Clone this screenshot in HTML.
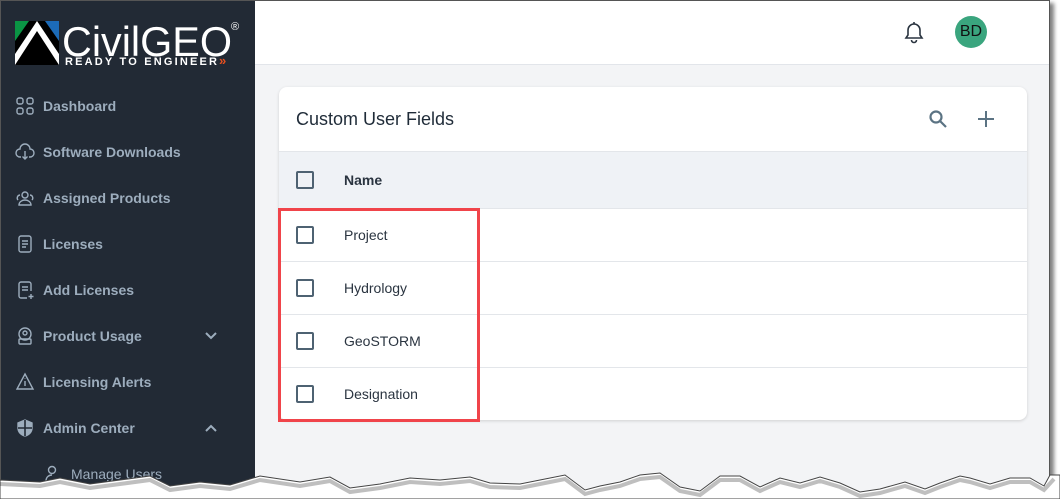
<!DOCTYPE html>
<html><head><style>
*{box-sizing:border-box;margin:0;padding:0}
body{width:1060px;height:499px;background:#fff;position:relative;overflow:hidden;font-family:"Liberation Sans",Arial,sans-serif}
#frame{position:absolute;left:0;top:0;width:1050px;height:499px;border:1px solid #555;background:#f3f4f6;overflow:hidden;box-shadow:4px 3px 4px rgba(0,0,0,.5)}
#side{position:absolute;left:0;top:0;width:254px;height:100%;background:#222a35}
.nav{position:absolute;left:14px;color:#9dadbd;font-size:14px;font-weight:bold;display:flex;align-items:center;gap:8px}
.nav svg{width:20px;height:20px;stroke:#9dadbd;fill:none;stroke-width:1.4}
#top{position:absolute;left:254px;top:0;right:0;height:64px;background:#fff;border-bottom:1px solid #e2e5ea}
#card{position:absolute;left:278px;top:86px;width:748px;height:333px;background:#fff;border-radius:8px;box-shadow:0 1px 3px rgba(0,0,0,.15);overflow:hidden}
.row{position:absolute;left:0;width:100%;height:53px;border-top:1px solid #e3e6ea;display:flex;align-items:center;font-size:14px;color:#2a3440}
.cb{width:18px;height:18px;border:2px solid #4e6272;border-radius:2px;margin-left:17px;margin-right:30px}
</style></head><body>
<div id="frame">
<div id="side">
 <svg style="position:absolute;left:14px;top:18px" width="226" height="48" viewBox="0 0 226 48">
  <rect x="0" y="2" width="44" height="44" fill="#000"/>
  <polygon points="0,2 14,2 0,22" fill="#0a9444"/>
  <polygon points="30,2 44,2 44,22" fill="#1c6bb8"/>
  <polygon points="0,46 0,35 22,2 44,35 44,46 22,12" fill="#fff"/>
  <text x="47" y="37" font-family="Liberation Sans" font-size="42" fill="#fff" textLength="170" lengthAdjust="spacingAndGlyphs">CivilGEO</text>
  <text x="216" y="11" font-family="Liberation Sans" font-size="11" fill="#fff">®</text>
  <text x="50" y="46" font-family="Liberation Sans" font-weight="bold" font-size="11" fill="#fff" textLength="152" lengthAdjust="spacing">READY TO ENGINEER</text>
  <text x="204" y="46" font-family="Liberation Sans" font-weight="bold" font-size="13" fill="#e8501f">»</text>
 </svg>
 <div class="nav" style="top:95px"><svg viewBox="0 0 20 20"><rect x="2" y="2" width="6" height="6" rx="2"/><rect x="12" y="2" width="6" height="6" rx="2"/><rect x="2" y="12" width="6" height="6" rx="2"/><rect x="12" y="12" width="6" height="6" rx="2"/></svg>Dashboard</div>
 <div class="nav" style="top:141px"><svg viewBox="0 0 20 20"><path d="M6 15H5a4 4 0 0 1 0-8 5 5 0 0 1 10 0 4 4 0 0 1 0 8h-1M10 9v8M7.5 14.5 10 17l2.5-2.5"/></svg>Software Downloads</div>
 <div class="nav" style="top:187px"><svg viewBox="0 0 20 20"><circle cx="10" cy="7" r="3"/><path d="M4 17c0-3 3-5 6-5s6 2 6 5zM3 12a3 3 0 0 1 2-5M17 12a3 3 0 0 0-2-5"/></svg>Assigned Products</div>
 <div class="nav" style="top:233px"><svg viewBox="0 0 20 20"><rect x="4" y="2" width="12" height="16" rx="2"/><path d="M7 7h6M7 10h6M7 13h4"/></svg>Licenses</div>
 <div class="nav" style="top:279px"><svg viewBox="0 0 20 20"><path d="M12 18H6a2 2 0 0 1-2-2V4a2 2 0 0 1 2-2h8a2 2 0 0 1 2 2v7M7 7h6M7 10h6M16 14v5M13.5 16.5h5"/></svg>Add Licenses</div>
 <div class="nav" style="top:325px"><svg viewBox="0 0 20 20"><circle cx="10" cy="8" r="6"/><circle cx="10" cy="7" r="2"/><rect x="4" y="13" width="12" height="5" rx="1"/></svg>Product Usage</div>
 <svg style="position:absolute;left:203px;top:330px" width="14" height="10" viewBox="0 0 14 10" fill="none" stroke="#9dadbd" stroke-width="2"><path d="M2 2l5 5 5-5"/></svg>
 <div class="nav" style="top:371px"><svg viewBox="0 0 20 20"><path d="M10 2 18 17H2z"/><path d="M10 9v5M10 6.5v.5"/></svg>Licensing Alerts</div>
 <div class="nav" style="top:417px"><svg viewBox="0 0 20 20"><path d="M10 2 17 5v5c0 4-3 7-7 8-4-1-7-4-7-8V5z" fill="#9dadbd"/><path d="M10 2v16M3 10h14" stroke="#222a35" stroke-width="1.6"/></svg>Admin Center</div>
 <svg style="position:absolute;left:203px;top:422px" width="14" height="10" viewBox="0 0 14 10" fill="none" stroke="#9dadbd" stroke-width="2"><path d="M2 8l5-5 5 5"/></svg>
 <div class="nav" style="top:463px;left:42px;font-weight:normal"><svg viewBox="0 0 20 20"><circle cx="9" cy="6" r="3.5"/><path d="M3 17c0-4 3-6 6-6"/></svg>Manage Users</div>
</div>
<div id="top">
 <svg style="position:absolute;left:648px;top:20px" width="22" height="24" viewBox="0 0 22 24" fill="none" stroke="#2a3440" stroke-width="1.6"><path d="M11 3a6 6 0 0 0-6 6v5l-2 3h16l-2-3V9a6 6 0 0 0-6-6zM11 1v2M8.5 19a2.5 2.5 0 0 0 5 0"/></svg>
 <div style="position:absolute;left:700px;top:15px;width:32px;height:32px;border-radius:50%;background:#3aa57e;color:#111;font-size:16px;text-align:center;line-height:32px">BD</div>
</div>
<div id="card" style="left:278px;top:86px">
 <div style="position:absolute;left:17px;top:22px;font-size:18px;color:#1f2b38">Custom User Fields</div>
 <svg style="position:absolute;left:649px;top:22px" width="20" height="20" viewBox="0 0 20 20" fill="none" stroke="#5b7383" stroke-width="2.2"><circle cx="8" cy="8" r="5.5"/><path d="M12 12l6 6"/></svg>
 <svg style="position:absolute;left:698px;top:23px" width="18" height="18" viewBox="0 0 18 18" fill="none" stroke="#5b7383" stroke-width="2"><path d="M9 1v16M1 9h16"/></svg>
 <div class="row" style="top:64px;height:57px;background:#eff2f6;font-weight:bold"><div class="cb"></div>Name</div>
 <div class="row" style="top:121px"><div class="cb"></div>Project</div>
 <div class="row" style="top:174px"><div class="cb"></div>Hydrology</div>
 <div class="row" style="top:227px"><div class="cb"></div>GeoSTORM</div>
 <div class="row" style="top:280px"><div class="cb"></div>Designation</div>
</div>
<div style="position:absolute;left:277px;top:207px;width:202px;height:214px;border:3px solid #f0444a"></div>
</div>
<svg style="position:absolute;left:0;top:0" width="1060" height="499" viewBox="0 0 1060 499">
 <path d="M0 480 L40 482 60 478 90 484 120 480 150 476 170 486 200 482 230 485 260 476 300 482 330 477 350 488 380 484 410 478 440 480 470 477 490 483 520 484 540 480 565 475 585 490 600 486 620 482 640 475 660 473 680 487 700 491 720 476 740 476 760 487 780 478 800 483 820 477 840 483 860 492 880 489 905 482 925 489 940 483 960 476 970 478 990 484 1010 478 1030 478 1044 486 1050 475 1060 475 1060 499 0 499Z" fill="#fff" stroke="#444" stroke-width="1"/>
 <path d="M0 484 L40 486 60 482 90 488 120 484 150 480 170 490 200 486 230 489 260 480 300 486 330 481 350 492 380 488 410 482 440 484 470 481 490 487 520 488 540 484 565 479 585 494 600 490 620 486 640 479 660 477 680 491 700 495 720 480 740 480 760 491 780 482 800 487 820 481 840 487 860 496 880 493 905 486 925 493 940 487 960 480 970 482 990 488 1010 482 1030 482 1044 490 1054 479" fill="none" stroke="rgba(0,0,0,.25)" stroke-width="4"/>
</svg>
</body></html>
